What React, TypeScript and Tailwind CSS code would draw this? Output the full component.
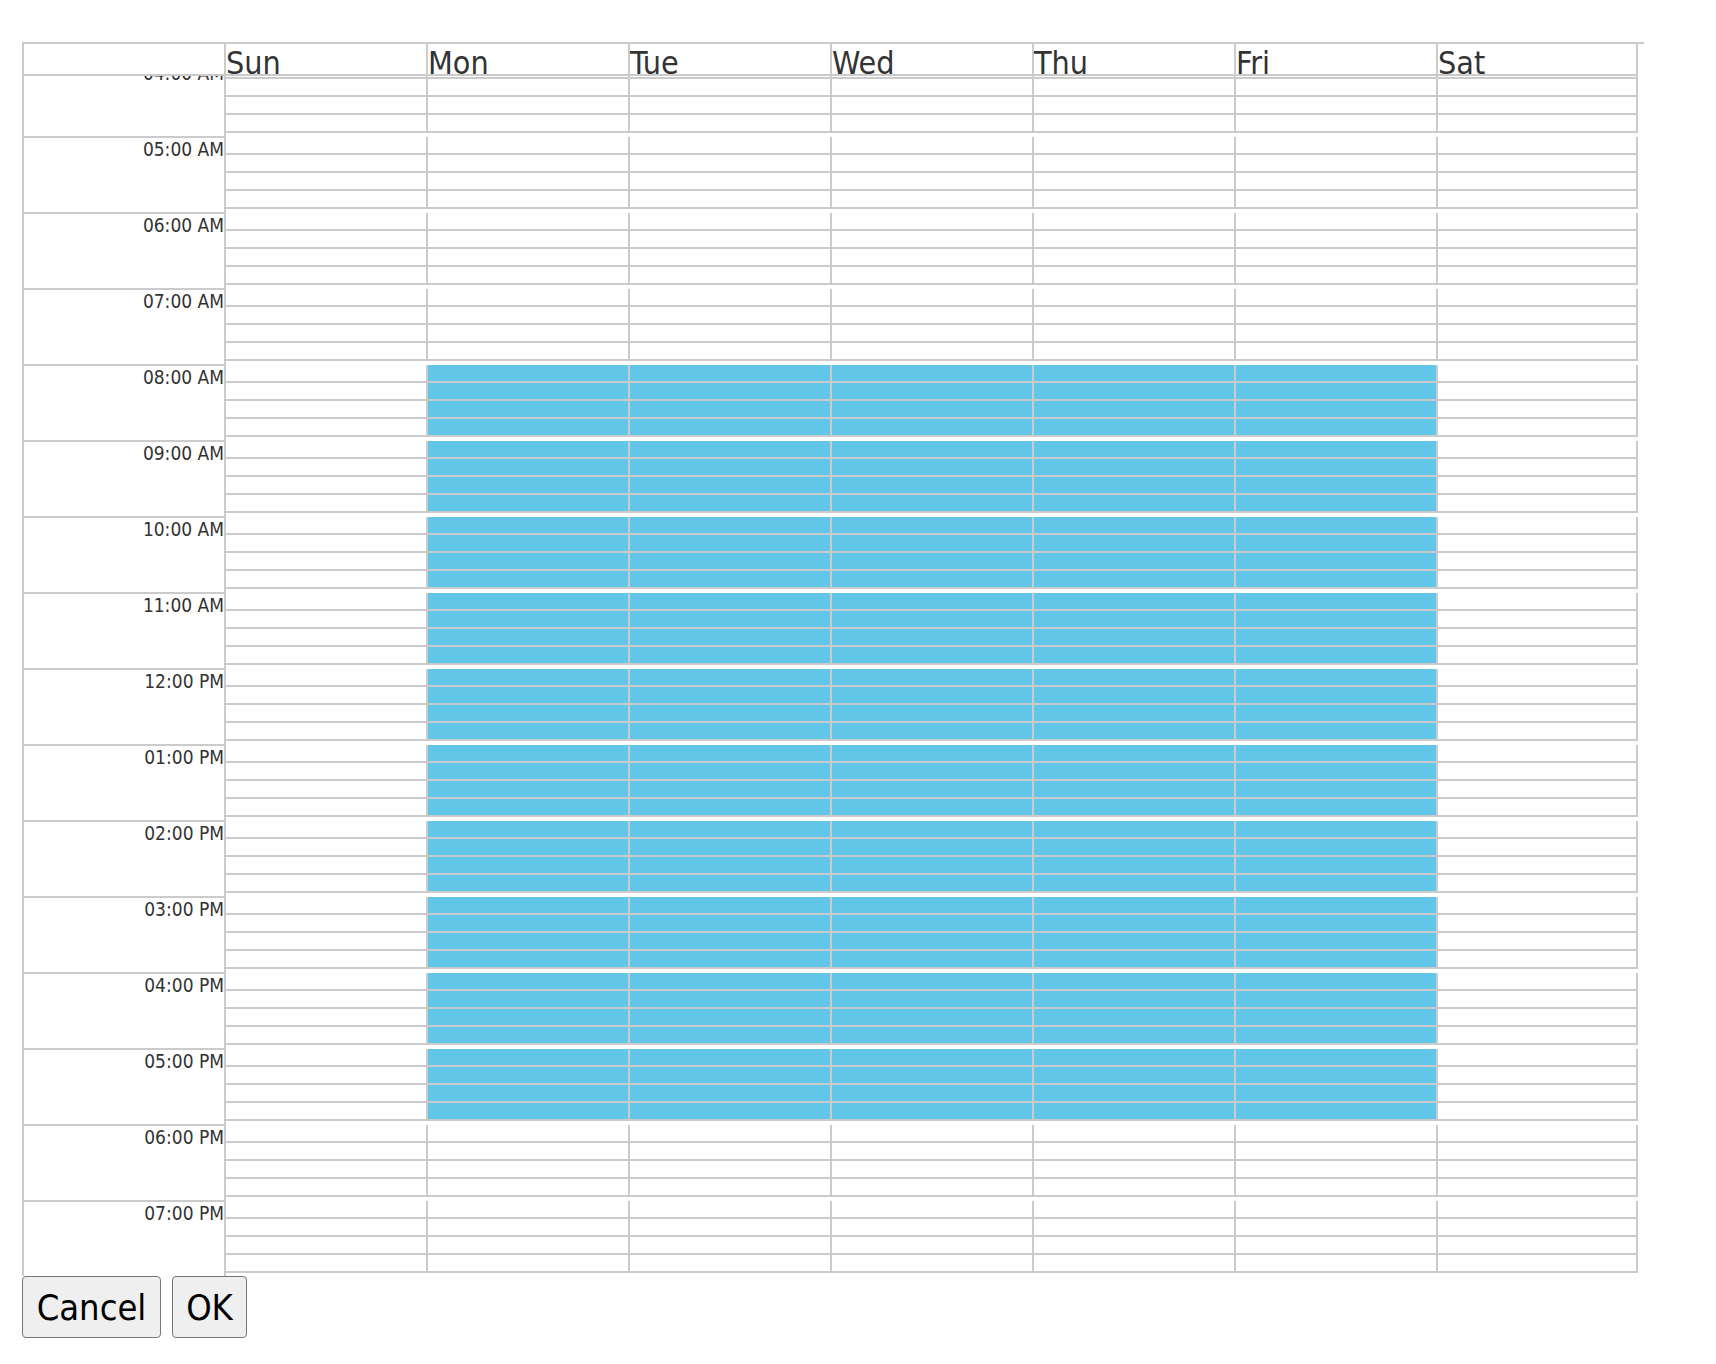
import React, { useLayoutEffect, useRef } from "react";

const days = ["Sun", "Mon", "Tue", "Wed", "Thu", "Fri", "Sat"];
const hours = Array.from({ length: 24 }, (_, i) => i);

const hourLabel = (h: number) => {
  const hh = h % 12 === 0 ? 12 : h % 12;
  return `${String(hh).padStart(2, "0")}:00 ${h < 12 ? "AM" : "PM"}`;
};

// Mon-Fri, 8am to 6pm
const isAvailable = (day: number, hour: number) =>
  day >= 1 && day <= 5 && hour >= 8 && hour < 18;

const colWidth = (i: number) => (i === 0 ? "w-[200px]" : "w-[202px]");

const dayBorders = (i: number) =>
  (i === 0 ? "" : "border-l-2 ") + (i === 6 ? "border-r-2" : "");

const HourRow = ({ hour }: { hour: number }) => {
  return (
    <div className="flex h-[76px]">
      <div className="w-[202px] shrink-0 border-t-2 border-r-2 border-[#cbcbcb] text-right text-[19px] leading-[normal] text-[#333]">
        {hourLabel(hour)}
      </div>
      {days.map((d, i) => (
        <div key={d} className={`${colWidth(i)} shrink-0 pt-[1px]`}>
          <div className={`${dayBorders(i)} border-[#cbcbcb]`}>
            {[0, 1, 2, 3].map((q) => (
              <div
                key={q}
                className={`h-[18px] border-b-2 border-[#cbcbcb] ${
                  isAvailable(i, hour) ? "bg-[#62c6e8]" : "bg-white"
                }`}
              />
            ))}
          </div>
        </div>
      ))}
    </div>
  );
};

const App = () => {
  const scrollRef = useRef<HTMLDivElement>(null);

  useLayoutEffect(() => {
    // start the view a bit before 5am
    if (scrollRef.current) scrollRef.current.scrollTop = 320;
  }, []);

  return (
    <div className="min-h-screen bg-white pt-[42px] pl-[22px] font-['DejaVu_Sans_Condensed','DejaVu_Sans',sans-serif] font-stretch-condensed">
      <div className="w-[1622px] border-t-2 border-l-2 border-[#cbcbcb]">
        <div className="flex">
          <div className="h-[32px] w-[202px] shrink-0 border-r-2 border-b-2 border-[#cbcbcb]" />
          {days.map((d, i) => (
            <div
              key={d}
              className={`${colWidth(i)} h-[32px] shrink-0 border-b-2 ${dayBorders(i)} border-[#cbcbcb] text-[32px] leading-[normal] text-[#333]`}
            >
              {d}
            </div>
          ))}
        </div>
        <div ref={scrollRef} className="h-[1200px] overflow-hidden">
          {hours.map((h) => (
            <HourRow key={h} hour={h} />
          ))}
        </div>
      </div>
      <div className="flex gap-[11px]">
        <button className="h-[62px] w-[139px] rounded-[4px] border border-[#767676] bg-[#efefef] text-[36px] leading-[normal] text-black">
          Cancel
        </button>
        <button className="h-[62px] w-[75px] rounded-[4px] border border-[#767676] bg-[#efefef] text-[36px] leading-[normal] text-black">
          OK
        </button>
      </div>
    </div>
  );
};

export default App;
